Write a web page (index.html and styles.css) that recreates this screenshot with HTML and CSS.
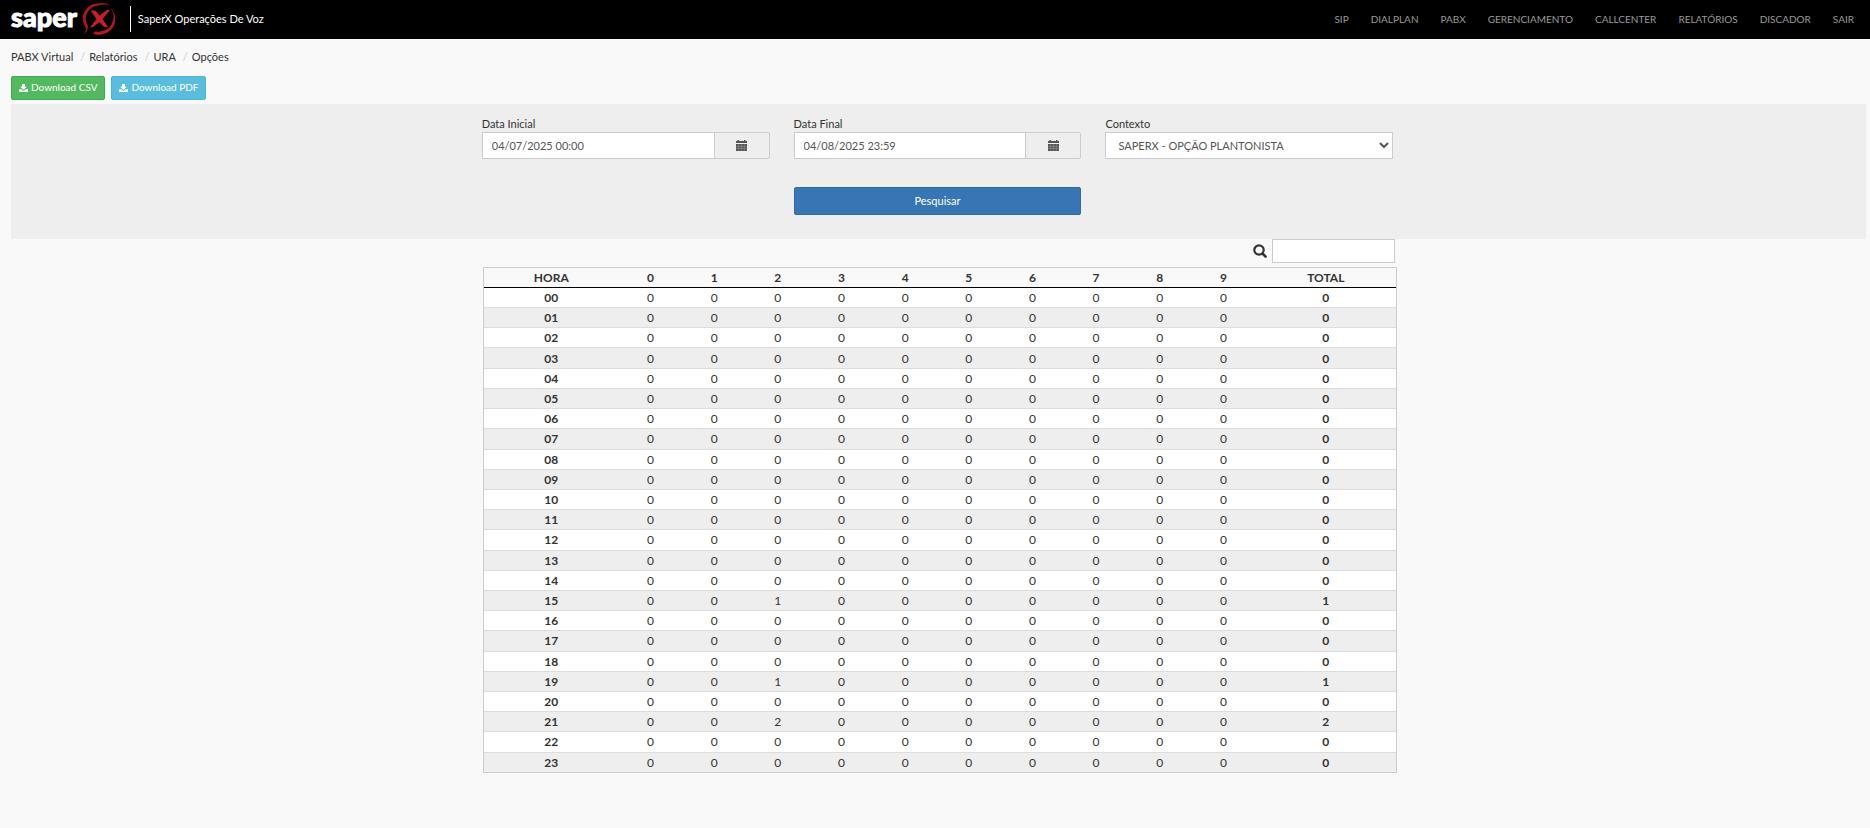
FILE: index.html
```html
<!DOCTYPE html>
<html lang="pt-BR">
<head>
<meta charset="utf-8">
<title>SaperX Operações De Voz</title>
<link rel="stylesheet" href="styles.css">
</head>
<body>
<header class="topbar">
  <div class="brand">
    <a class="logo" href="#" aria-label="saperX">
      <span class="logo-word">saper</span>
      <svg class="logo-mark" viewBox="0 0 32 34" aria-hidden="true">
        <path d="M1 32Q4 28 2.500 25A15 15 0 0 1 15 1.500Q21 0 27 3Q19 1.500 13 4A13 13 0 0 0 5 24Q5 29 1 32Z" fill="#a8171c"/>
        <path d="M26 5A15 15 0 0 1 20 32Q15 34 10 31.500L12 29.500Q16 30 19 29A14 14 0 0 0 26 5Z" fill="#b5191f"/>
        <path d="M8 9Q12 7 14.500 11L16.500 13.500L24 8L27 8L19.500 17L25 25Q21 26 19 23L16.500 20L10 25L7 25.500L13.500 17Z" fill="#c42026"/>
      </svg>
    </a>
    <span class="brand-title">SaperX Operações De Voz</span>
  </div>
  <nav class="menu">
    <a href="#">SIP</a><a href="#">DIALPLAN</a><a href="#">PABX</a><a href="#">GERENCIAMENTO</a><a href="#">CALLCENTER</a><a href="#">RELATÓRIOS</a><a href="#">DISCADOR</a><a href="#">SAIR</a>
  </nav>
</header>
<main class="page">
  <ol class="breadcrumb">
    <li><a href="#">PABX Virtual</a></li><li><a href="#">Relatórios</a></li><li><a href="#">URA</a></li><li><a href="#">Opções</a></li>
  </ol>
  <div class="downloads">
    <button class="btn btn-csv" type="button"><svg class="icon-dl" viewBox="0 0 10 9" aria-hidden="true"><path d="M3.500 0h3v3h2.200L5 6.400 1.300 3h2.200zM0 6h2.600L5 8l2.400-2H10v3H0z" fill="currentColor"/></svg>Download CSV</button>
    <button class="btn btn-pdf" type="button"><svg class="icon-dl" viewBox="0 0 10 9" aria-hidden="true"><path d="M3.500 0h3v3h2.200L5 6.400 1.300 3h2.200zM0 6h2.600L5 8l2.400-2H10v3H0z" fill="currentColor"/></svg>Download PDF</button>
  </div>
  <section class="panel">
    <form class="filters">
      <div class="field">
        <label for="start">Data Inicial</label>
        <div class="group">
          <input class="control" id="start" type="text" value="04/07/2025 00:00">
          <button class="addon" type="button" aria-label="Abrir calendário"><svg class="icon-cal" viewBox="0 0 11 11" aria-hidden="true"><path d="M0 1h1.500V0h1.500v1h5V0h1.500v1H11v2H0zM0 4h11v7H0z" fill="#555"/><path d="M0 6.500h11M0 8.500h11M2.700 4v7M5.500 4v7M8.300 4v7" stroke="#aaa" stroke-width=".4"/></svg></button>
        </div>
      </div>
      <div class="field">
        <label for="end">Data Final</label>
        <div class="group">
          <input class="control" id="end" type="text" value="04/08/2025 23:59">
          <button class="addon" type="button" aria-label="Abrir calendário"><svg class="icon-cal" viewBox="0 0 11 11" aria-hidden="true"><path d="M0 1h1.500V0h1.500v1h5V0h1.500v1H11v2H0zM0 4h11v7H0z" fill="#555"/><path d="M0 6.500h11M0 8.500h11M2.700 4v7M5.500 4v7M8.300 4v7" stroke="#aaa" stroke-width=".4"/></svg></button>
        </div>
      </div>
      <div class="field">
        <label for="context">Contexto</label>
        <select class="control" id="context"><option>SAPERX - OPÇÃO PLANTONISTA</option></select>
      </div>
      <button class="submit" type="submit">Pesquisar</button>
    </form>
  </section>
  <section class="results">
    <div class="search">
      <label for="search" aria-label="Buscar"><svg class="icon-search" viewBox="0 0 14 14" aria-hidden="true"><circle cx="6" cy="6" r="4.700" fill="none" stroke="#333" stroke-width="2.200"/><path d="M9.500 9.500L12.600 12.600" stroke="#333" stroke-width="2.600" stroke-linecap="round"/></svg></label>
      <input id="search" type="search">
    </div>
    <table class="report">
      <colgroup><col class="col-hour"><col span="10"><col class="col-total"></colgroup>
      <thead><tr id="head"></tr></thead>
      <tbody id="rows"></tbody>
    </table>
  </section>
</main>
<script src="report.js"></script>
</body>
</html>
```
FILE: styles.css
```css
* { box-sizing: border-box; }
body { margin: 0; background: #f9f9f9; color: #333; font: 11px/17px Lato, sans-serif; }
a { color: inherit; text-decoration: none; }
button, input, select { font: inherit; }
.topbar { display: flex; align-items: center; justify-content: space-between; height: 39px; padding: 0 16px 1px 11px; background: #000; }
.brand, .logo { display: flex; align-items: center; }
.logo { gap: 6px; padding-right: 15px; color: #fff; }
.logo-word { padding-bottom: 4px; font: 900 27px/30px Lato, sans-serif; -webkit-text-stroke: 1px #fff; }
.logo-mark { width: 32px; height: 34px; }
.brand-title { padding: 4px 7px 5px; border-left: 1px solid #fff; line-height: 17px; color: #fff; }
.menu { display: flex; gap: 22px; color: #999; font-size: 10px; }
.page { padding: 9px 4px 0 11px; }
.breadcrumb { display: flex; margin: 0 0 11px; padding: 0; list-style: none; line-height: 17px; }
.breadcrumb li + li::before { content: "/"; padding: 0 4px 0 7px; color: #ccc; }
.downloads { display: flex; gap: 6px; }
.btn { display: flex; align-items: center; gap: 3px; height: 24px; padding: 0 7px 1px; border: 1px solid; border-radius: 2px; color: #fff; font-size: 10px; }
.btn-csv { background: #53b960; border-color: #41a94e; }
.btn-pdf { background: #5abddd; border-color: #46b8da; }
.icon-dl { width: 9px; height: 8px; }
.panel { margin-top: 4px; padding: 12px 0 24px; background: #eee; }
.filters { display: grid; grid-template-columns: repeat(3, 1fr); column-gap: 24px; row-gap: 28px; width: 50%; margin: 0 auto; padding: 0 9px 0 7px; }
.field label { display: block; line-height: 16px; }
.group { display: flex; }
.control { width: 100%; min-width: 0; height: 27px; padding: 0 9px; border: 1px solid #ccc; border-radius: 0; background: #fff; color: #555; }
.addon { display: flex; flex: 0 0 56px; align-items: center; justify-content: center; margin-left: -1px; border: 1px solid #ccc; border-radius: 0 2px 2px 0; background: #eee; }
.icon-cal { width: 11px; height: 11px; }
select.control { padding: 0 0 0 8px; }
.submit { grid-column: 2; height: 28px; padding: 0 6px 1px; border: 1px solid #2e6da4; border-radius: 2px; background: #3875b5; color: #fff; }
.results { width: 50%; margin: 0 auto; padding: 0 5px 0 8px; }
.search { display: flex; align-items: center; justify-content: flex-end; gap: 5px; padding-right: 2px; }
.search label { display: flex; }
.icon-search { width: 14px; height: 14px; }
.search input { width: 123px; height: 24px; border: 1px solid #ccc; background: #fff; }
.report { width: 100%; height: 506px; margin: 4px 0 24px; border: 1px solid #ccc; border-collapse: separate; border-spacing: 0; table-layout: fixed; text-align: center; font-size: 12px; }
.report th, .report td { padding: 0; line-height: 17px; }
.report thead th { height: 20px; border-bottom: 1px solid #000; }
.report tbody tr { background: #fff; }
.report tbody tr:nth-child(even) { background: #eee; }
.report tbody tr + tr > * { border-top: 1px solid #ddd; }
.col-hour { width: 135px; }
.col-total { width: 141px; }
```
FILE: report.js
```js
const digits = [...Array(10).keys()];
const calls = { 15: { 2: 1 }, 19: { 2: 1 }, 21: { 2: 2 } };
const th = (text, scope) => `<th scope="${scope}">${text}</th>`;

document.getElementById("head").innerHTML =
  ["HORA", ...digits, "TOTAL"].map((t) => th(t, "col")).join("");

document.getElementById("rows").innerHTML = [...Array(24).keys()].map((hour) => {
  const counts = digits.map((d) => (calls[hour] || {})[d] || 0);
  const total = counts.reduce((a, b) => a + b, 0);
  const cells = counts.map((n) => `<td>${n}</td>`).join("");
  return `<tr>${th(String(hour).padStart(2, "0"), "row")}${cells}<td><b>${total}</b></td></tr>`;
}).join("");
```
